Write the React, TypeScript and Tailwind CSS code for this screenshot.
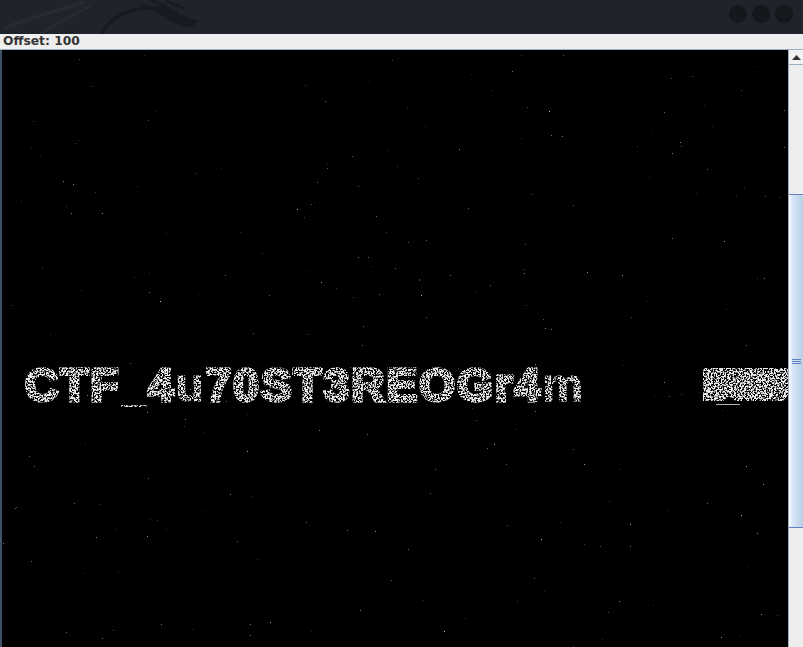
import React from "react";

// seeded so the speckle stays the same between runs
function makeDots(count: number) {
  let seed = 4242;
  const rnd = () => {
    seed = (seed * 1664525 + 1013904223) % 4294967296;
    return seed / 4294967296;
  };
  const dots: { x: number; y: number; o: number }[] = [];
  for (let i = 0; i < count; i++) {
    dots.push({ x: Math.floor(rnd() * 785), y: Math.floor(rnd() * 597), o: 0.15 + rnd() * rnd() * 0.7 });
  }
  return dots;
}

const dots = makeDots(240);

function Dragon() {
  return (
    <svg className="absolute left-0 top-0" width="270" height="34" viewBox="0 0 270 34" fill="none">
      <path d="M4 28 C30 18 60 10 84 2" stroke="#252a33" strokeWidth="4" />
      <path d="M40 34 C60 22 78 12 90 6" stroke="#252a33" strokeWidth="3" />
      <path d="M102 34 C108 20 122 11 146 8 C160 7 170 9 178 14" stroke="#171b21" strokeWidth="3.5" />
      <path d="M132 2 C146 6 160 9 172 12 L199 21 L190 28 L174 23 L162 15 Z" fill="#171b21" />
      <path d="M150 0 L170 8 M166 0 L184 9" stroke="#171b21" strokeWidth="2" />
    </svg>
  );
}

export default function App() {
  return (
    <div className="flex h-[647px] w-[803px] flex-col overflow-hidden bg-black font-['DejaVu_Sans',sans-serif]">
      {/* Window title bar */}
      <div className="relative flex h-[34px] items-start justify-end gap-[5px] bg-[#1e232c] pr-[10px] pt-[5px]">
        <Dragon />
        <div className="relative h-[18px] w-[18px] rounded-full bg-[#14171b]" />
        <div className="relative h-[18px] w-[18px] rounded-full bg-[#14171b]" />
        <div className="relative h-[18px] w-[18px] rounded-full bg-[#14171b]" />
      </div>

      {/* Offset label */}
      <div className="flex h-[15px] items-center bg-[#eeeeee] pl-[3px] text-[12.3px] font-bold leading-[15px] text-[#333333]">
        Offset: 100
      </div>
      <div className="h-px bg-[#9fb0c4]" />

      <div className="flex min-h-0 flex-1">
        <div className="w-[2px] bg-[#3d5264]" />

        {/* Image panel */}
        <div className="relative min-w-0 flex-1 overflow-hidden bg-black">
          <svg className="absolute h-0 w-0">
            <filter id="speckle" x="0" y="0" width="100%" height="100%">
              <feTurbulence type="fractalNoise" baseFrequency="0.6" numOctaves="2" seed="7" result="n" />
              <feColorMatrix
                in="n"
                type="matrix"
                values="0 0 0 0 1  0 0 0 0 1  0 0 0 0 1  6 6 0 0 -5.4"
                result="m"
              />
              <feComposite in="SourceGraphic" in2="m" operator="in" />
            </filter>
          </svg>

          <svg className="absolute inset-0" width="786" height="597">
            {dots.map((d, i) => (
              <rect key={i} x={d.x} y={d.y} width="1" height="1" fill="#ffffff" opacity={d.o} />
            ))}
          </svg>

          <div className="flex pl-[23px] pt-[303px]">
            <div className="whitespace-nowrap font-['Liberation_Sans',sans-serif] text-[46px] font-bold leading-[64px] tracking-[2px] text-[#eeeeee] [-webkit-text-stroke:3.5px_#eeeeee] [filter:url(#speckle)]">
              CTF<span className="[-webkit-text-stroke:0]">_</span>4<span className="[-webkit-text-stroke:1px_#eeeeee]">u</span>70ST3REOGr4<span className="[-webkit-text-stroke:1px_#eeeeee]">m</span>
            </div>
          </div>

          {/* Noise block on the right edge of the image */}
          <svg className="absolute left-[701px] top-[318px]" width="85" height="40">
            <g filter="url(#speckle)">
              <path d="M0 0H85V27L80 33H32L26 28L20 33H0Z" fill="#eeeeee" />
            </g>
            <rect x="13" y="36" width="24" height="1" fill="#ffffff" opacity="0.7" />
          </svg>
        </div>

        {/* Scrollbar */}
        <div className="flex w-[15px] flex-col border-l border-[#9fb0c4] bg-[#eeeeee]">
          <div className="flex h-[15px] items-center justify-center border-b border-[#9fb0c4] bg-[#f2f2f2]">
            <svg width="9" height="5" viewBox="0 0 9 5">
              <path d="M4.5 0L9 5H0Z" fill="#333333" />
            </svg>
          </div>
          <div className="h-[129px]" />
          <div className="flex h-[334px] items-center justify-center border-y border-[#6382bf] bg-[linear-gradient(90deg,#ffffff_0%,#d8e6f7_25%,#b8cfe5_100%)]">
            <div className="flex w-[9px] flex-col gap-px">
              <div className="h-px bg-[#6382bf]" />
              <div className="h-px bg-[#6382bf]" />
              <div className="h-px bg-[#6382bf]" />
            </div>
          </div>
        </div>
      </div>
    </div>
  );
}
